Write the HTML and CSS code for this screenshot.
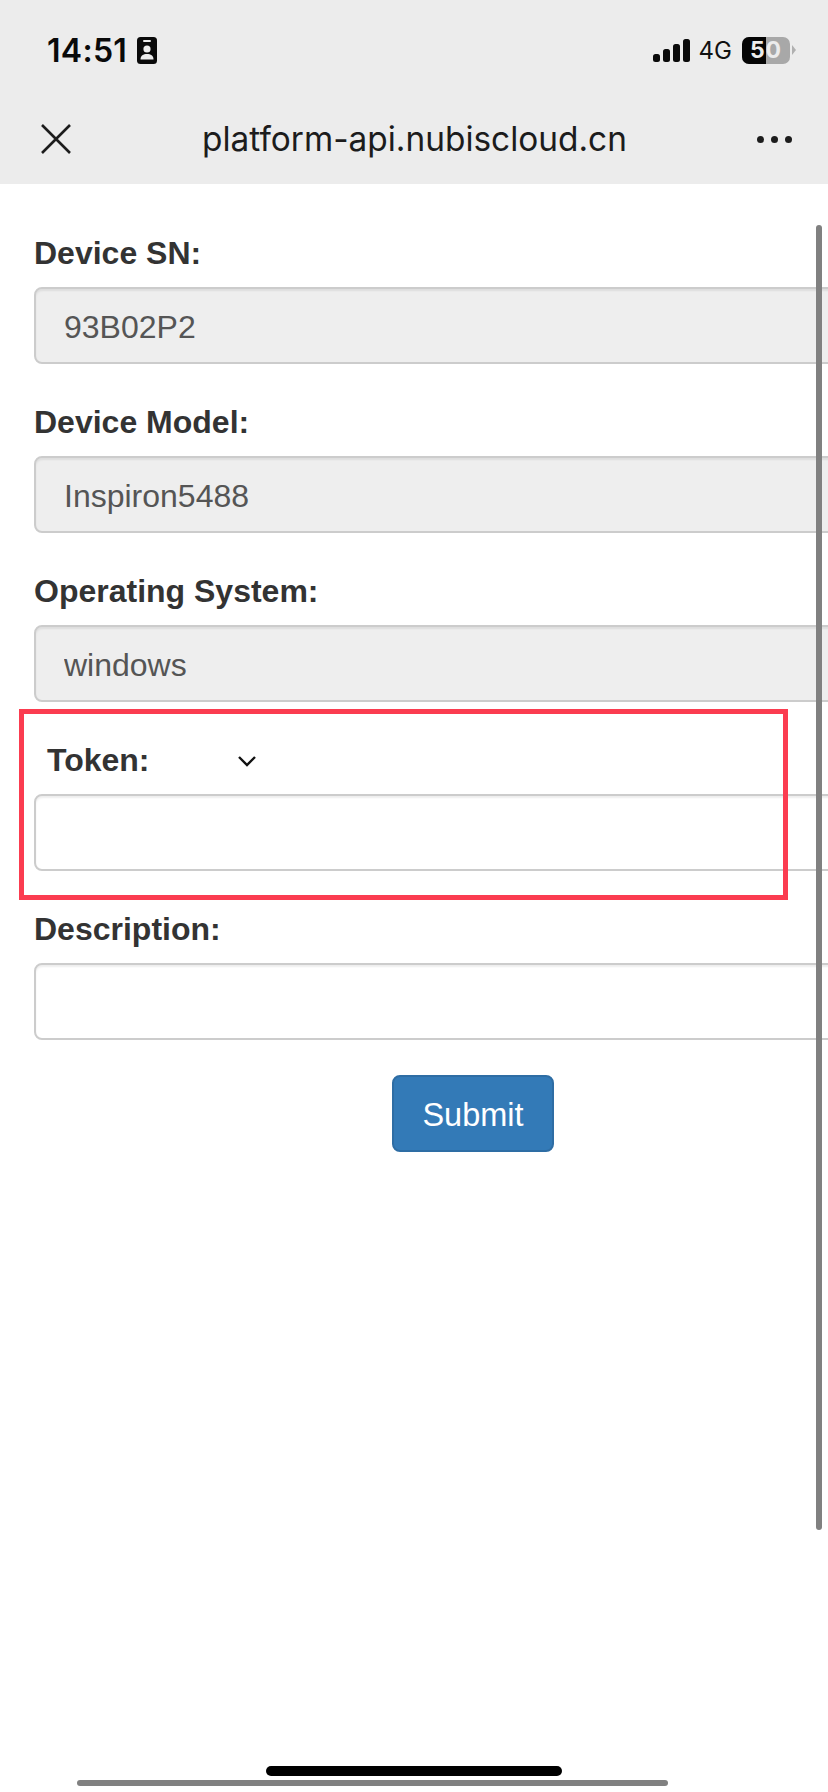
FILE: index.html
```html
<!DOCTYPE html>
<html>

<head>
  <title>platform-api.nubiscloud.cn</title>
  <link rel="stylesheet" href="styles.css">
</head>

<body>
  <header class="top-bar">
    <div class="status-row">
      <div class="status-left">
        <span class="time">14:51</span>
        <svg class="badge-icon" width="20" height="27" viewBox="0 0 20 27">
          <rect width="20" height="27" rx="3.5" fill="#0a0a0a" />
          <rect x="6" y="3" width="8" height="2" rx="1" fill="#ececec" />
          <circle cx="10" cy="12" r="3.6" fill="#ececec" />
          <path d="M3.5 22.5c0-4 2.8-5.5 6.5-5.5s6.5 1.5 6.5 5.5z" fill="#ececec" />
        </svg>
      </div>
      <div class="status-right">
        <svg class="signal-icon" width="37" height="23" viewBox="0 0 37 23">
          <rect x="0" y="15" width="7" height="8" rx="2.5" />
          <rect x="10" y="10" width="7" height="13" rx="2.5" />
          <rect x="20" y="5" width="7" height="18" rx="2.5" />
          <rect x="30" y="0" width="7" height="23" rx="2.5" />
        </svg>
        <span class="network">4G</span>
        <div class="battery">
          <div class="battery-body">
            <span class="battery-fill"></span>
            <span class="battery-num">50</span>
          </div>
          <span class="battery-cap"></span>
        </div>
      </div>
    </div>
    <nav class="nav-row">
      <svg class="close-icon" width="32" height="32" viewBox="0 0 32 32">
        <path d="M2 2 30 30M30 2 2 30" fill="none" stroke="#1c1c1c" stroke-width="2.6" />
      </svg>
      <span class="page-title">platform-api.nubiscloud.cn</span>
      <div class="more-dots"><i></i><i></i><i></i></div>
    </nav>
  </header>

  <main class="content">
    <form class="device-form">
      <div class="field">
        <label>Device SN:</label>
        <input class="text-input" value="93B02P2" readonly>
      </div>
      <div class="field">
        <label>Device Model:</label>
        <input class="text-input" value="Inspiron5488" readonly>
      </div>
      <div class="field">
        <label>Operating System:</label>
        <input class="text-input" value="windows" readonly>
      </div>
      <div class="field">
        <label class="token-label">Token:
          <svg class="chevron" width="20" height="12" viewBox="0 0 20 12">
            <path d="M2 2 10 10 18 2" fill="none" stroke="#111" stroke-width="2.4" />
          </svg>
        </label>
        <input class="text-input editable">
      </div>
      <div class="field">
        <label>Description:</label>
        <input class="text-input editable">
      </div>
      <div class="form-actions">
        <button class="submit-btn" type="button">Submit</button>
      </div>
    </form>
  </main>

  <div class="highlight-box"></div>
  <div class="scroll-v"></div>
  <div class="home-bar"></div>
  <div class="scroll-h"></div>
</body>

</html>
```

FILE: styles.css
```css
html,
body {
  margin: 0;
  height: 100%;
}

body {
  position: relative;
  overflow: hidden;
  background-color: #fff;
  color: #333;
  font-family: "Liberation Sans", Arial, sans-serif;
}

.top-bar {
  height: 184px;
  background-color: #ececec;
  color: #111;
}

.status-row {
  height: 100px;
  display: flex;
  align-items: center;
  justify-content: space-between;
  padding: 0 32px 0 47px;
}

.status-left,
.status-right {
  display: flex;
  align-items: center;
}

.time {
  font: 600 32px "Inter", sans-serif;
  letter-spacing: 0.3px;
  color: #0a0a0a;
}

.badge-icon {
  margin-left: 10px;
}

.signal-icon {
  fill: #0a0a0a;
}

.network {
  margin-left: 9px;
  font: 400 24px "Inter", sans-serif;
}

.battery {
  margin-left: 10px;
  display: flex;
  align-items: center;
}

.battery-body {
  position: relative;
  width: 48px;
  height: 27px;
  border-radius: 7px;
  background-color: #a8a8a8;
  overflow: hidden;
  text-align: center;
  font: 700 23px/27px "Inter", sans-serif;
  color: #ececec;
}

.battery-fill {
  position: absolute;
  left: 0;
  top: 0;
  width: 24px;
  height: 100%;
  background-color: #050505;
}

.battery-num {
  position: relative;
  letter-spacing: 1px;
}

.battery-cap {
  width: 0;
  height: 0;
  margin-left: 2px;
  border-left: 4px solid #b0b0b0;
  border-top: 5px solid transparent;
  border-bottom: 5px solid transparent;
}

.nav-row {
  height: 84px;
  box-sizing: border-box;
  display: flex;
  align-items: center;
  justify-content: space-between;
  padding: 0 36px 6px 40px;
}

.page-title {
  font: 400 33.4px "Inter", sans-serif;
  color: #1c1c1c;
}

.more-dots {
  display: flex;
  gap: 7px;
}

.more-dots i {
  width: 7px;
  height: 7px;
  border-radius: 50%;
  background-color: #1c1c1c;
}

.content {
  overflow: hidden;
  padding: 52px 0 0 34px;
}

.device-form {
  width: 878px;
}

.field {
  height: 169px;
}

.field label {
  display: block;
  height: 51px;
  font-size: 32px;
  font-weight: bold;
  line-height: 34px;
}

.token-label {
  margin-left: 13px;
}

.chevron {
  margin-left: 79px;
  vertical-align: 4px;
}

.text-input {
  display: block;
  box-sizing: border-box;
  width: 100%;
  height: 77px;
  padding: 3px 28px 0;
  border: 2px solid #ccc;
  border-radius: 8px;
  background-color: #eee;
  outline: none;
  color: #555;
  font: 32px "Liberation Sans", Arial, sans-serif;
  box-shadow: inset 0 2px 2px rgba(0, 0, 0, 0.07);
}

.text-input.editable {
  background-color: #fff;
}

.form-actions {
  margin-top: -6px;
  text-align: center;
}

.submit-btn {
  width: 162px;
  height: 77px;
  padding: 3px 0 0;
  border: 2px solid #2e6da4;
  border-radius: 8px;
  background-color: #337ab7;
  color: #fff;
  font: 32.5px "Liberation Sans", Arial, sans-serif;
}

.highlight-box {
  position: absolute;
  left: 19px;
  top: 709px;
  width: 769px;
  height: 191px;
  box-sizing: border-box;
  border: 5px solid #fb3c50;
}

.scroll-v {
  position: absolute;
  left: 816px;
  top: 225px;
  width: 6px;
  height: 1305px;
  border-radius: 3px;
  background-color: #808080;
}

.home-bar {
  position: absolute;
  left: 266px;
  top: 1766px;
  width: 296px;
  height: 10px;
  border-radius: 5px;
  background-color: #000;
}

.scroll-h {
  position: absolute;
  left: 77px;
  top: 1780px;
  width: 591px;
  height: 6px;
  border-radius: 3px;
  background-color: #808080;
}
```
